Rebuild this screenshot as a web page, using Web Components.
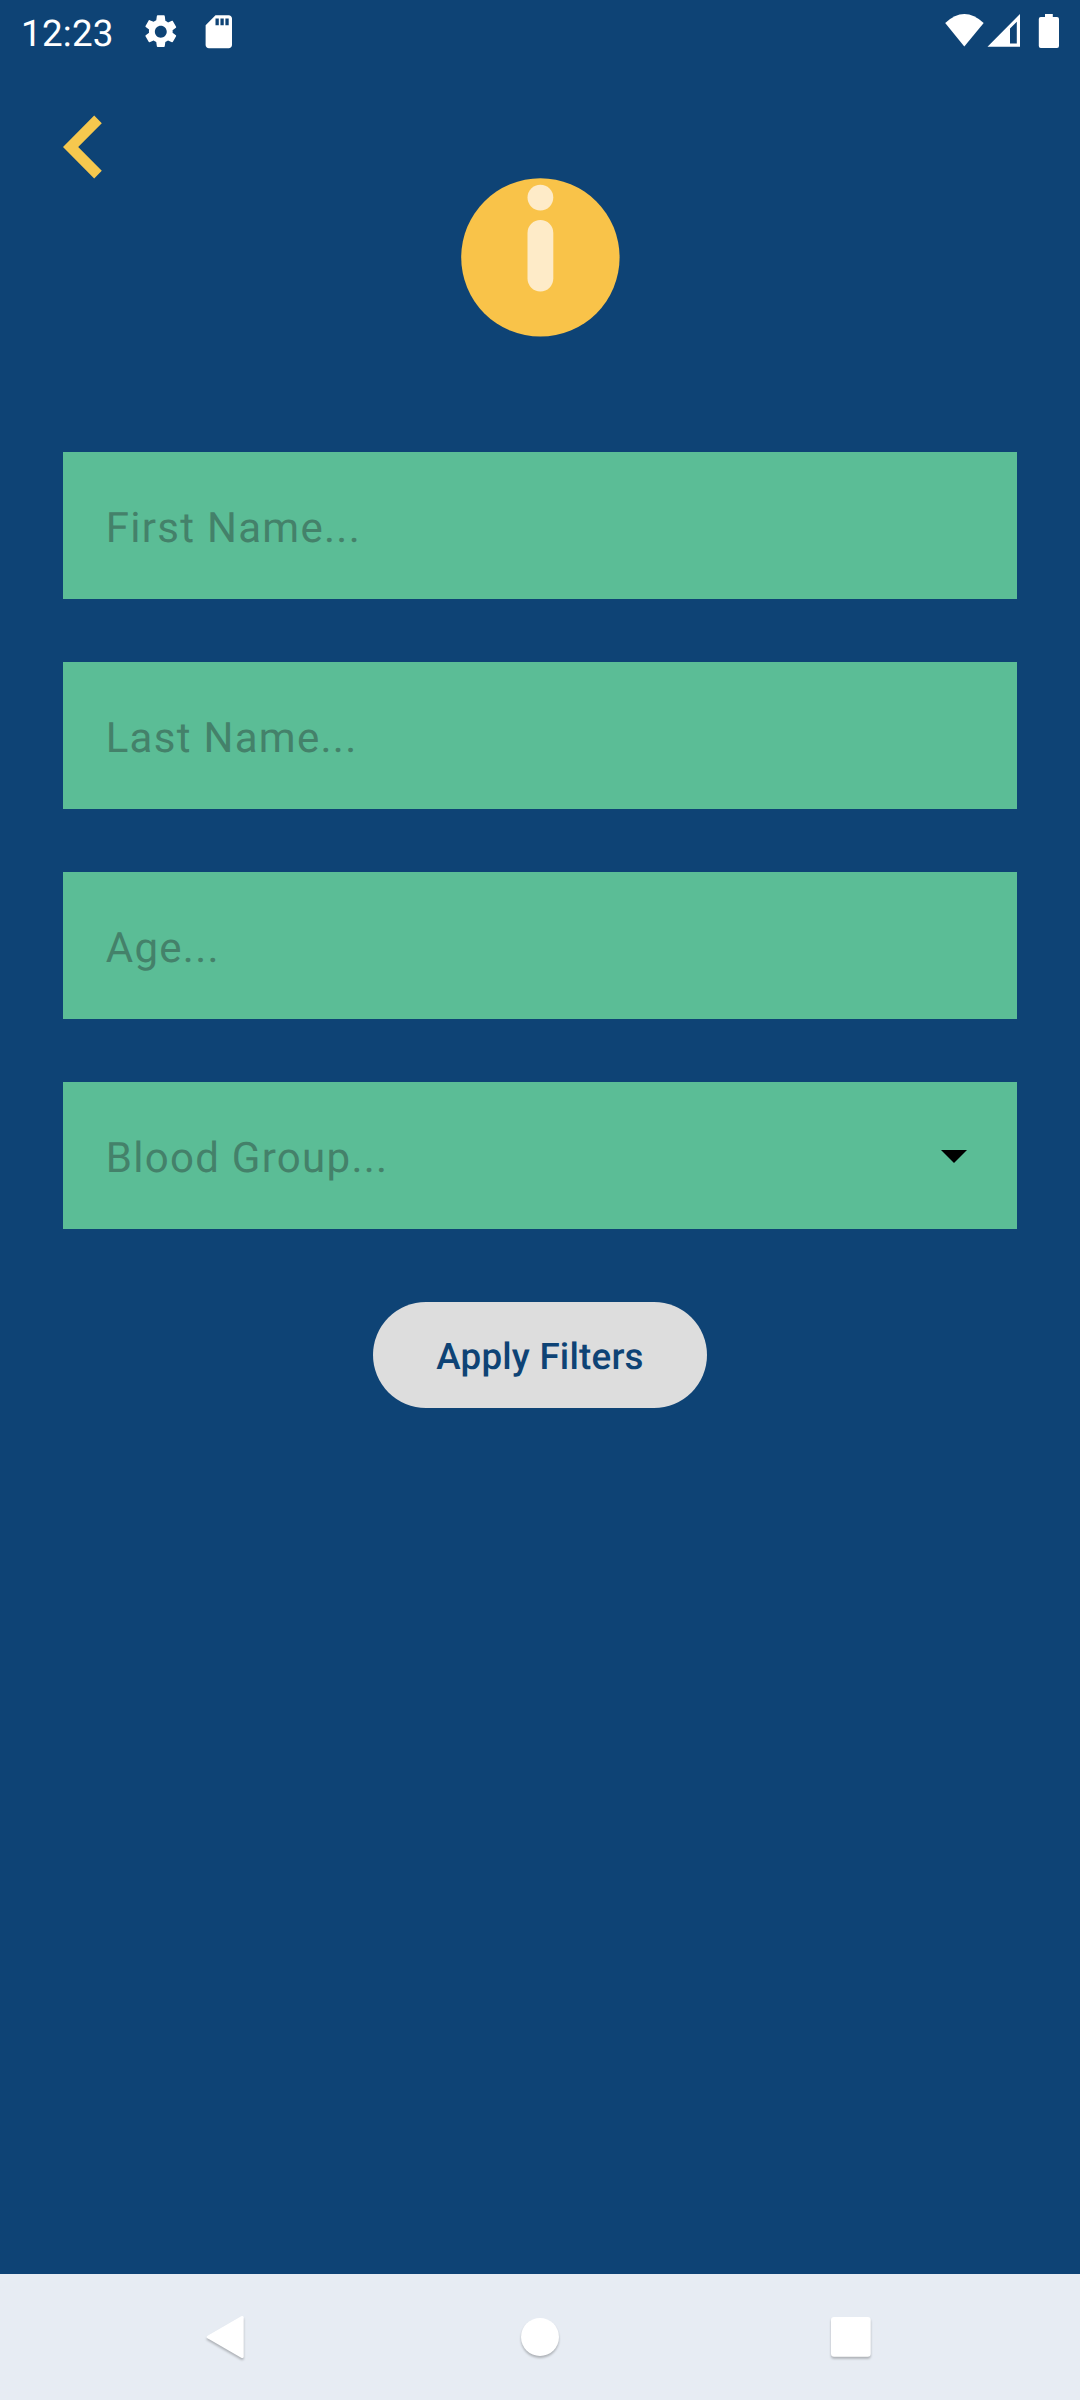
<!DOCTYPE html>
<html lang="en">
<head>
<meta charset="utf-8">
<title>Filters</title>
<style>
html,body{margin:0;padding:0}
body{width:1080px;height:2400px;overflow:hidden;background:#0e4375;font-family:Roboto,sans-serif;text-rendering:geometricPrecision}
</style>
</head>
<body>
<filter-screen></filter-screen>
<script>
const define = (name, markup) => {
  const template = document.createElement('template');
  template.innerHTML = markup;
  customElements.define(name, class extends HTMLElement {
    constructor() {
      super();
      this.attachShadow({mode: 'open'}).append(template.content.cloneNode(true));
    }
  });
};

define('status-bar', `
<style>
:host{display:flex;justify-content:space-between;height:63px;color:#fff}
.side{display:flex}
.time{font-size:36.75px;letter-spacing:.25px;line-height:43px;padding:12px 0 0 21px;width:120px;white-space:nowrap}
svg{display:block;fill:#fff}
.icon{width:39.6px;height:39.6px;margin-top:12px}
.gear{margin-left:.2px}
.card{margin-left:18.4px}
</style>
<div class="side">
  <div class="time">12:23</div>
  <svg class="icon gear" viewBox="0 0 24 24"><path d="M19.14 12.94c.04-.3.06-.61.06-.94 0-.32-.02-.64-.07-.94l2.03-1.58c.18-.14.23-.41.12-.61l-1.92-3.32c-.12-.22-.37-.29-.59-.22l-2.39.96c-.5-.38-1.03-.7-1.62-.94L14.4 2.41c-.04-.24-.24-.41-.48-.41h-3.84c-.24 0-.43.17-.47.41l-.36 2.54c-.59.24-1.13.57-1.62.94l-2.39-.96c-.22-.08-.47 0-.59.22L2.74 8.47c-.12.21-.08.47.12.61l2.03 1.58c-.05.3-.09.63-.09.94s.02.64.07.94l-2.03 1.58c-.18.14-.23.41-.12.61l1.92 3.32c.12.22.37.29.59.22l2.39-.96c.5.38 1.03.7 1.62.94l.36 2.54c.05.24.24.41.48.41h3.84c.24 0 .44-.17.47-.41l.36-2.54c.59-.24 1.13-.56 1.62-.94l2.39.96c.22.08.47 0 .59-.22l1.92-3.32c.12-.22.07-.47-.12-.61l-2.01-1.58zM12 15.6c-1.98 0-3.6-1.62-3.6-3.6s1.62-3.6 3.6-3.6 3.6 1.62 3.6 3.6-1.62 3.6-3.6 3.6z"/></svg>
  <svg class="icon card" viewBox="0 0 24 24"><path d="M18 2h-8L4.02 8 4 20c0 1.1.9 2 2 2h12c1.1 0 2-.9 2-2V4c0-1.1-.9-2-2-2zm-6 6h-2V4h2v4zm3 0h-2V4h2v4zm3 0h-2V4h2v4z"/></svg>
</div>
<div class="side">
  <svg width="140" height="63" viewBox="0 0 140 63"><path d="M5.2 23Q24.3 5 43.7 23L24.3 46.5Z"/><path fill-rule="evenodd" d="M47.5 46.8L80 14V46.8ZM70 28.6V43.6H76.8V21.8Z"/><path d="M105 14h7.8v3h4.2q2 0 2 2v27q0 2-2 2h-16.2q-2 0-2-2v-27q0-2 2-2h4.200z"/></svg>
</div>`);

define('back-button', `
<style>:host{display:block;padding:52px 0 0 63px;height:63px}svg{display:block;fill:#f6c84e}</style>
<svg width="40" height="64" viewBox="0 0 40 64"><path d="M31.2 .5L38.8 8.2L15.2 32L38.8 55.8L31.2 63.5L0 32Z"/></svg>`);

define('info-badge', `
<style>:host{display:flex;justify-content:center;height:274px}svg{display:block}</style>
<svg width="160" height="160" viewBox="0 0 160 160"><circle cx="80.4" cy="79.4" r="79.2" fill="#f9c349"/><circle cx="80.4" cy="19.6" r="12.9" fill="#feebc8"/><rect x="67.5" y="42" width="25.8" height="71.5" rx="12.9" fill="#feebc8"/></svg>`);

define('filter-field', `
<style>
:host{display:flex;align-items:center;justify-content:space-between;box-sizing:border-box;height:147px;padding:7px 42px 0 42.7px;background:#5bbd96;color:#44816a;font-size:42px;letter-spacing:1.29px;line-height:50px;white-space:nowrap}
svg{display:none;margin:-5px 8px 0 0}
:host([dropdown]) svg{display:block}
</style>
<span><slot></slot></span>
<svg width="26" height="13" viewBox="0 0 26 13"><path d="M0 0H26L13 13Z"/></svg>`);

define('pill-button', `
<style>
:host{display:flex;align-items:center;justify-content:center;box-sizing:border-box;width:334px;height:106px;border-radius:53px;padding-top:3px;background:#ddd;color:#0e4375;font-size:36.75px;font-weight:500;letter-spacing:.22px;line-height:43px;white-space:nowrap}
</style>
<slot></slot>`);

define('nav-bar', `
<style>
:host{display:flex;box-sizing:border-box;align-items:center;justify-content:space-between;height:126px;padding:0 195px 0 193px;background:#e7ecf3}
svg{display:block;fill:#fff;overflow:visible;filter:drop-shadow(0 2px 1.2px rgba(0,0,0,.25))}
</style>
<svg width="64" height="64" viewBox="0 0 64 64"><path d="M48.2 11.2Q50.7 10.2 50.7 12.5V51.5Q50.7 53.7 48.2 52.8L14.5 33.3Q12.500 32 14.500 30.700Z"/></svg>
<svg width="64" height="64" viewBox="0 0 64 64"><circle cx="33" cy="32" r="19"/></svg>
<svg width="64" height="64" viewBox="0 0 64 64"><rect x="10" y="12" width="39.700" height="39.700" rx="3"/></svg>`);

define('filter-screen', `
<style>
:host{display:flex;flex-direction:column;width:1080px;height:2400px;background:#0e4375}
form{display:flex;flex-direction:column;gap:63px;margin:0 63px}
.actions{display:flex;justify-content:center;padding-top:73px;flex:1;align-items:flex-start}
</style>
<status-bar></status-bar>
<back-button></back-button>
<info-badge></info-badge>
<form>
  <filter-field>First Name...</filter-field>
  <filter-field>Last Name...</filter-field>
  <filter-field>Age...</filter-field>
  <filter-field dropdown>Blood Group...</filter-field>
</form>
<div class="actions"><pill-button>Apply Filters</pill-button></div>
<nav-bar></nav-bar>`);
</script>
</body>
</html>
